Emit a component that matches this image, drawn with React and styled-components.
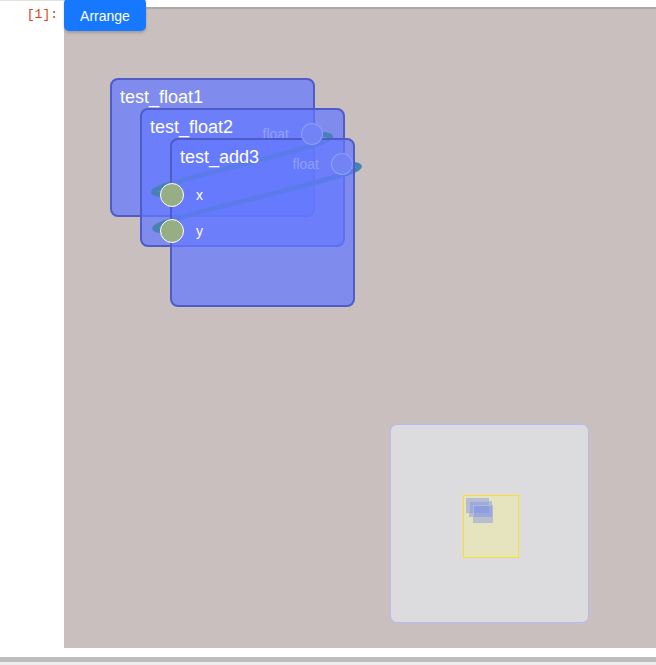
import React from "react";
import styled, { createGlobalStyle } from "styled-components";

const GlobalStyle = createGlobalStyle`
  html, body {
    margin: 0;
    padding: 0;
    background: #ffffff;
    overflow: hidden;
    font-family: "Liberation Sans", Arial, sans-serif;
  }
`;

const CANVAS_BG = "#c8bfbe";

const Page = styled.div`
  width: 100%;
  display: flex;
  flex-direction: column;
`;

const TopRule = styled.div`
  width: 78px;
  height: 1px;
  background: #e2e2e2;
`;

const Cell = styled.div`
  display: flex;
  align-items: flex-start;
`;

const Prompt = styled.div`
  width: 64px;
  flex: none;
  box-sizing: border-box;
  padding: 6px 6px 0 0;
  text-align: right;
  font-family: "Liberation Mono", "Courier New", monospace;
  font-size: 13px;
  line-height: 16px;
  color: #d84315;
`;

const Output = styled.div`
  flex: 1;
  min-width: 0;
  padding: 6px 0 9px 0;
`;

// the graph editor surface
const Canvas = styled.div`
  position: relative;
  height: 639px;
  border-top: 2px solid #aaaaaa;
  background: ${CANVAS_BG};
`;

const ArrangeButton = styled.button`
  position: absolute;
  top: -11px;
  left: 0;
  z-index: 5;
  width: 82px;
  height: 33px;
  box-sizing: border-box;
  padding: 3px 0 0 0;
  display: flex;
  align-items: center;
  justify-content: center;
  border: none;
  border-radius: 5px;
  background: #1677ff;
  color: #ffffff;
  font-family: "Liberation Sans", Arial, sans-serif;
  font-size: 14px;
  box-shadow: 0 2px 3px rgba(0, 0, 0, 0.18);
  cursor: pointer;
`;

// <div> node box, placed on the free canvas
const NodeBox = styled.div`
  position: absolute;
  left: ${(p) => p.$x}px;
  top: ${(p) => p.$y}px;
  width: ${(p) => p.$w}px;
  height: ${(p) => p.$h}px;
  box-sizing: border-box;
  padding: 7px 8px 9px 8px;
  border: 2px solid #4f5bc8;
  border-radius: 8px;
  background: rgba(100, 120, 255, 0.72);
  color: #ffffff;
`;

const NodeTitle = styled.div`
  font-size: 18px;
  line-height: 21px;
  white-space: nowrap;
`;

const OutputRow = styled.div`
  display: flex;
  align-items: center;
  justify-content: flex-end;
  gap: 12px;
  height: 24px;
  margin: 14px -18px 0 0;
`;

const InputRow = styled.div`
  display: flex;
  align-items: center;
  gap: 12px;
  height: 24px;
  margin: ${(p) => (p.$first ? "15px" : "12px")} 0 0 -20px;
`;

const PortLabel = styled.span`
  font-size: 14px;
  line-height: 16px;
  color: #ffffff;
`;

const Port = styled.div`
  position: relative;
  z-index: 2;
  flex: none;
  box-sizing: border-box;
  width: ${(p) => (p.$input ? 24 : 22)}px;
  height: ${(p) => (p.$input ? 24 : 22)}px;
  border-radius: 50%;
  background: ${(p) => (p.$input ? "#97ae84" : "rgb(114, 131, 246)")};
  border: 1px solid
    ${(p) => (p.$input ? "#ffffff" : "rgba(170, 184, 255, 0.5)")};
`;

const EdgeLayer = styled.svg`
  position: absolute;
  left: 0;
  top: 0;
  width: 100%;
  height: 100%;
  overflow: visible;
  pointer-events: none;
`;

const MiniMap = styled.div`
  position: absolute;
  left: 326px;
  top: 415px;
  width: 199px;
  height: 199px;
  box-sizing: border-box;
  border: 1px solid #b3bbf6;
  border-radius: 7px;
  background: #dcdcde;
`;

const MiniViewport = styled.div`
  position: absolute;
  left: 72px;
  top: 70px;
  width: 56px;
  height: 63px;
  box-sizing: border-box;
  border: 1px solid #fbdf2c;
  background: #e6e4be;
`;

const MiniNode = styled.div`
  position: absolute;
  box-sizing: border-box;
  border: 1px solid rgba(180, 188, 212, 0.9);
  background: rgba(125, 145, 230, 0.45);
`;

const ScrollTrack = styled.div`
  height: 8px;
  background: #ececec;
`;

const ScrollThumb = styled.div`
  height: 5px;
  background: #bdbdbd;
`;

const nodes = [
  { id: 1, title: "test_float1", x: 46, y: 69, w: 205, h: 139, outputs: ["float"] },
  { id: 2, title: "test_float2", x: 76, y: 99, w: 205, h: 139, outputs: ["float"] },
  { id: 3, title: "test_add3", x: 106, y: 129, w: 185, h: 169, inputs: ["x", "y"] },
];

const edges = [
  { from: [248, 125], to: [108, 186] },
  { from: [278, 155], to: [108, 222] },
];

function edgePath({ from, to }) {
  const k = 100;
  return `M ${from[0]} ${from[1]} C ${from[0] + k} ${from[1]}, ${to[0] - k} ${to[1]}, ${to[0]} ${to[1]}`;
}

function Node({ node }) {
  return (
    <NodeBox $x={node.x} $y={node.y} $w={node.w} $h={node.h}>
      <NodeTitle>{node.title}</NodeTitle>
      {(node.outputs || []).map((o) => (
        <OutputRow key={o}>
          <PortLabel>{o}</PortLabel>
          <Port />
        </OutputRow>
      ))}
      {(node.inputs || []).map((name, i) => (
        <InputRow key={name} $first={i === 0}>
          <Port $input />
          <PortLabel>{name}</PortLabel>
        </InputRow>
      ))}
    </NodeBox>
  );
}

function Edges() {
  return (
    <EdgeLayer>
      {edges.map((e, i) => (
        <path
          key={i}
          d={edgePath(e)}
          fill="none"
          stroke="#4682b4"
          strokeWidth="5"
          strokeLinecap="round"
        />
      ))}
    </EdgeLayer>
  );
}

function Overview() {
  const scale = 0.11;
  const ox = nodes[0].x;
  const oy = nodes[0].y;
  return (
    <MiniMap>
      <MiniViewport />
      {nodes.map((n) => (
        <MiniNode
          key={n.id}
          style={{
            left: 75 + (n.x - ox) * scale,
            top: 73 + (n.y - oy) * scale,
            width: n.w * scale,
            height: n.h * scale,
          }}
        />
      ))}
    </MiniMap>
  );
}

export default function App() {
  return (
    <>
      <GlobalStyle />
      <Page>
        <TopRule />
        <Cell>
          <Prompt>[1]:</Prompt>
          <Output>
            <Canvas>
              <ArrangeButton>Arrange</ArrangeButton>
              <Node node={nodes[0]} />
              <Node node={nodes[1]} />
              <Edges />
              <Node node={nodes[2]} />
              <Overview />
            </Canvas>
          </Output>
        </Cell>
        <ScrollThumb />
        <ScrollTrack />
      </Page>
    </>
  );
}
